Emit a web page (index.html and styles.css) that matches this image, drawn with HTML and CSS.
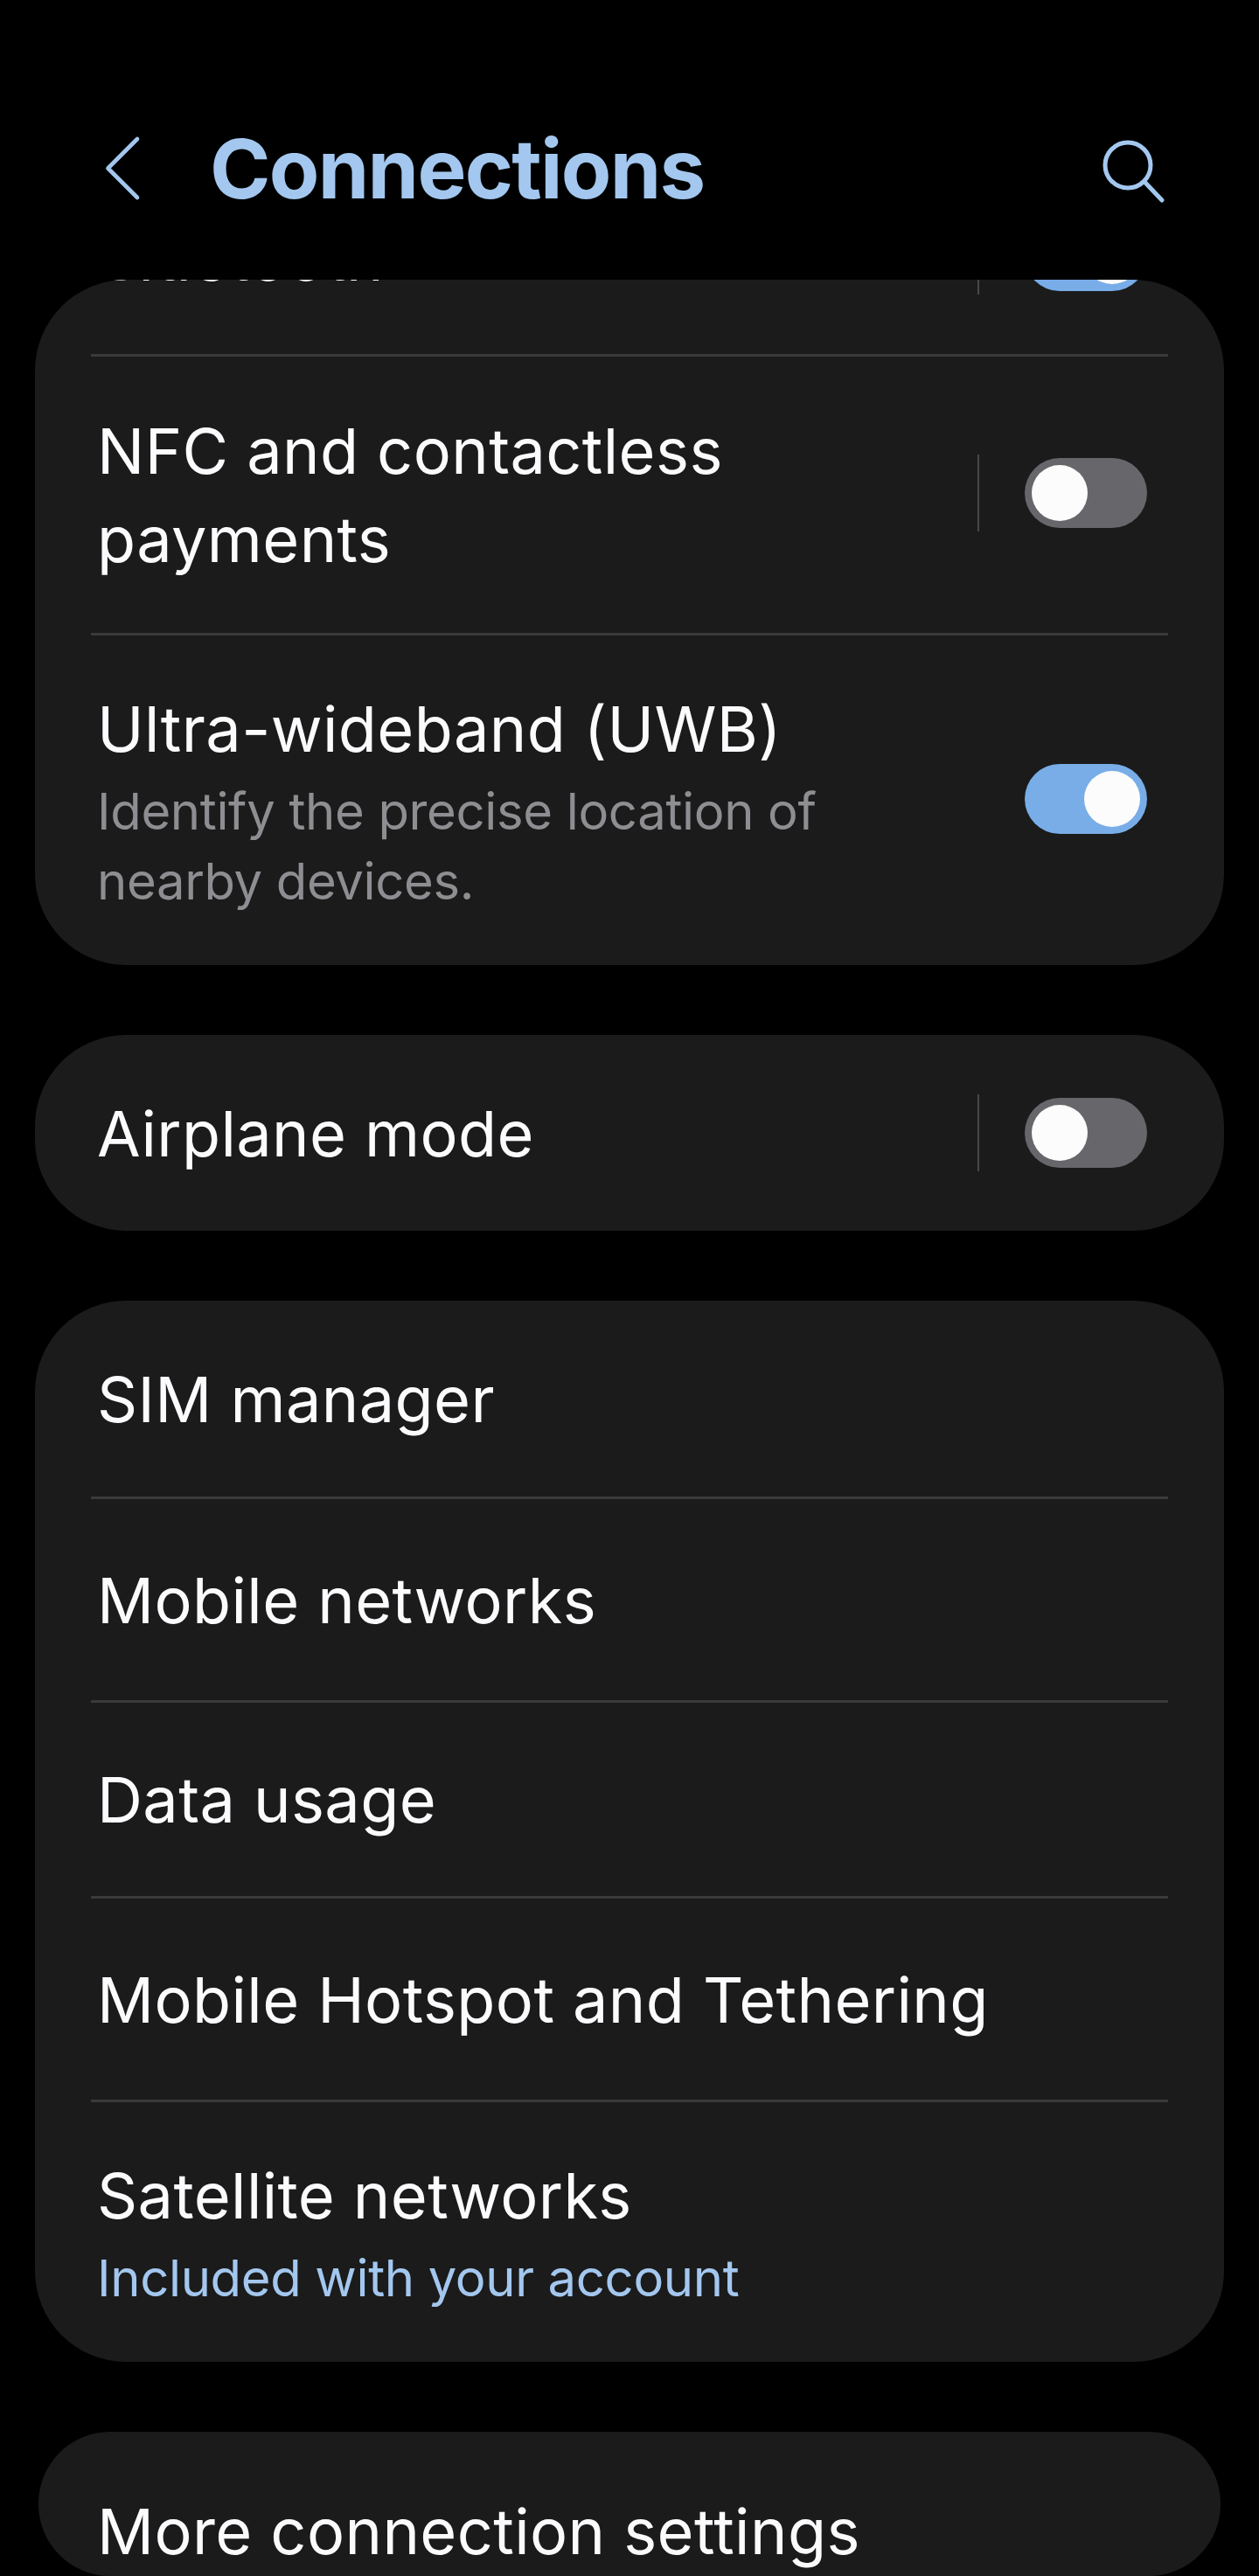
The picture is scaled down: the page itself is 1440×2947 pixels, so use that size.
FILE: index.html
```html
<!DOCTYPE html>
<html lang="en">
<head>
<meta charset="utf-8">
<title>Connections</title>
<link rel="stylesheet" href="styles.css">
</head>
<body>
<div class="screen">
  <header class="appbar">
    <svg class="back" viewBox="0 0 44 80" width="44" height="80"><path d="M39 6 L5.5 39.5 L39 73" fill="none" stroke="#a3c7ef" stroke-width="4.6" stroke-linecap="round" stroke-linejoin="round"/></svg>
    <h1 class="title">Connections</h1>
    <svg class="search" viewBox="0 0 76 76" width="76" height="76"><circle cx="32" cy="32" r="26" fill="none" stroke="#a3c7ef" stroke-width="5"/><path d="M51 51 L71 72" fill="none" stroke="#a3c7ef" stroke-width="5" stroke-linecap="round"/></svg>
  </header>
  <main class="list">
    <section class="card">
      <div class="row row-clipped">
        <div class="text"><div class="label">Bluetooth</div></div>
        <span class="vline"></span>
        <span class="toggle on"><span class="knob"></span></span>
      </div>
      <hr class="sep">
      <div class="row row-nfc">
        <div class="text"><div class="label">NFC and contactless<br>payments</div></div>
        <span class="vline"></span>
        <span class="toggle"><span class="knob"></span></span>
      </div>
      <hr class="sep">
      <div class="row row-uwb">
        <div class="text">
          <div class="label">Ultra-wideband (UWB)</div>
          <div class="sub">Identify the precise location of<br>nearby devices.</div>
        </div>
        <span class="toggle on"><span class="knob"></span></span>
      </div>
    </section>
    <section class="card">
      <div class="row row-air">
        <div class="text"><div class="label">Airplane mode</div></div>
        <span class="vline"></span>
        <span class="toggle"><span class="knob"></span></span>
      </div>
    </section>
    <section class="card">
      <div class="row row-a"><div class="text"><div class="label">SIM manager</div></div></div>
      <hr class="sep">
      <div class="row row-b"><div class="text"><div class="label">Mobile networks</div></div></div>
      <hr class="sep">
      <div class="row row-c"><div class="text"><div class="label">Data usage</div></div></div>
      <hr class="sep">
      <div class="row row-b"><div class="text"><div class="label">Mobile Hotspot and Tethering</div></div></div>
      <hr class="sep">
      <div class="row row-sat">
        <div class="text">
          <div class="label">Satellite networks</div>
          <div class="sub link">Included with your account</div>
        </div>
      </div>
    </section>
    <section class="card card-last">
      <div class="label">More connection settings</div>
    </section>
  </main>
</div>
</body>
</html>
```
FILE: styles.css
```css
* { box-sizing: border-box; }
html, body { margin: 0; padding: 0; background: #000; }
body { font-family: Inter, "Liberation Sans", sans-serif; color: #fbfbfe; }
.screen { width: 1440px; height: 2947px; overflow: hidden; display: flex; flex-direction: column; background: #000; }
.appbar { height: 320px; flex: none; display: flex; align-items: flex-start; padding: 153px 0 0 118px; }
.back { flex: none; }
.title { margin: -8px 0 0 78px; font-size: 94px; line-height: 96px; font-weight: 700; color: #a3c7ef; letter-spacing: -1.7px; }
.search { flex: none; margin: 4px 106px 0 auto; }
.list { flex: 1; min-height: 0; overflow: hidden; display: flex; flex-direction: column; gap: 80px; }
.card { margin: 0 40px; background: #1b1b1b; border-radius: 104px; overflow: hidden; flex: none; }
.card-last { margin: 0 44px; height: 165px; border-radius: 82px; padding: 63px 0 0 67px; }
.row { display: flex; align-items: center; padding: 0 88px 0 71px; }
.row-clipped { height: 224px; margin-top: -139px; }
.row-clipped .text { padding-top: 2px; }
.row-nfc { height: 316px; }
.row-nfc .vline, .row-nfc .toggle { margin-bottom: 4px; }
.row-uwb { height: 377px; }
.row-uwb .toggle { margin-bottom: 3px; }
.row-air { height: 224px; }
.row-a { height: 224px; }
.row-b { height: 230px; }
.row-c { height: 221px; }
.row-sat { height: 297px; }
.text { flex: 1; min-width: 0; }
.label { font-size: 72px; line-height: 101px; letter-spacing: 0.4px; white-space: nowrap; }
.sub { margin-top: 4px; font-size: 58px; line-height: 80px; color: #8e8e92; letter-spacing: -0.35px; white-space: nowrap; }
.link { color: #a3c7ef; }
.vline { flex: none; width: 2px; height: 88px; background: #48484a; margin-right: 52px; }
.toggle { flex: none; width: 140px; height: 80px; border-radius: 40px; background: #67676b; padding: 8px; display: flex; }
.toggle.on { background: #78ade8; justify-content: flex-end; }
.knob { width: 64px; height: 64px; border-radius: 50%; background: #fcfcfc; }
.sep { margin: 0 64px; height: 3px; border: 0; background: #3a3a3a; }
```
